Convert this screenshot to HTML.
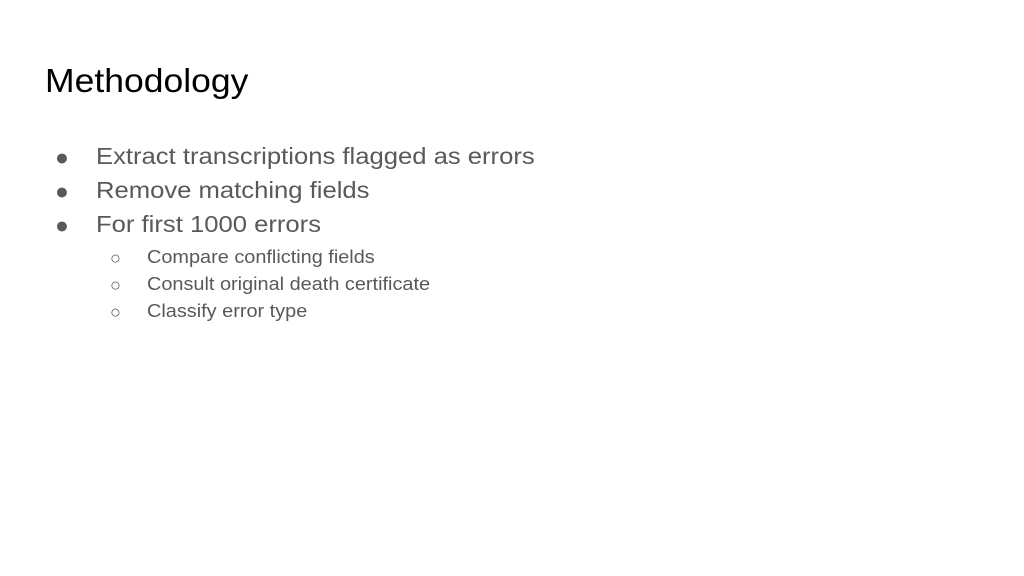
<!DOCTYPE html>
<html><head><style>
body{margin:0;width:1024px;height:576px;background:#fff;font-family:"Liberation Sans",Arial,sans-serif;position:relative;overflow:hidden}
.t{position:absolute;left:45px;top:63px;font-size:33.5px;color:#000;white-space:nowrap;transform:scaleX(1.06);transform-origin:0 0}
.l{position:absolute;color:#595959;white-space:nowrap}
.b1{font-size:23.3px;transform:scaleX(1.1);transform-origin:0 0}
.b2{font-size:18px;transform:scaleX(1.105);transform-origin:0 0}
.d{position:absolute;color:#595959;white-space:nowrap}
</style></head><body>
<div class="t">Methodology</div>
<div class="d" style="left:55px;top:144px;font-size:23px">●</div><div class="l b1" style="left:96px;top:143px">Extract transcriptions flagged as errors</div>
<div class="d" style="left:55px;top:178px;font-size:23px">●</div><div class="l b1" style="left:96px;top:177px">Remove matching fields</div>
<div class="d" style="left:55px;top:212px;font-size:23px">●</div><div class="l b1" style="left:96px;top:211px">For first 1000 errors</div>
<div class="d" style="left:110px;top:248px;font-size:18px">○</div><div class="l b2" style="left:147px;top:247px">Compare conflicting fields</div>
<div class="d" style="left:110px;top:275px;font-size:18px">○</div><div class="l b2" style="left:147px;top:274px">Consult original death certificate</div>
<div class="d" style="left:110px;top:302px;font-size:18px">○</div><div class="l b2" style="left:147px;top:301px">Classify error type</div>
</body></html>
